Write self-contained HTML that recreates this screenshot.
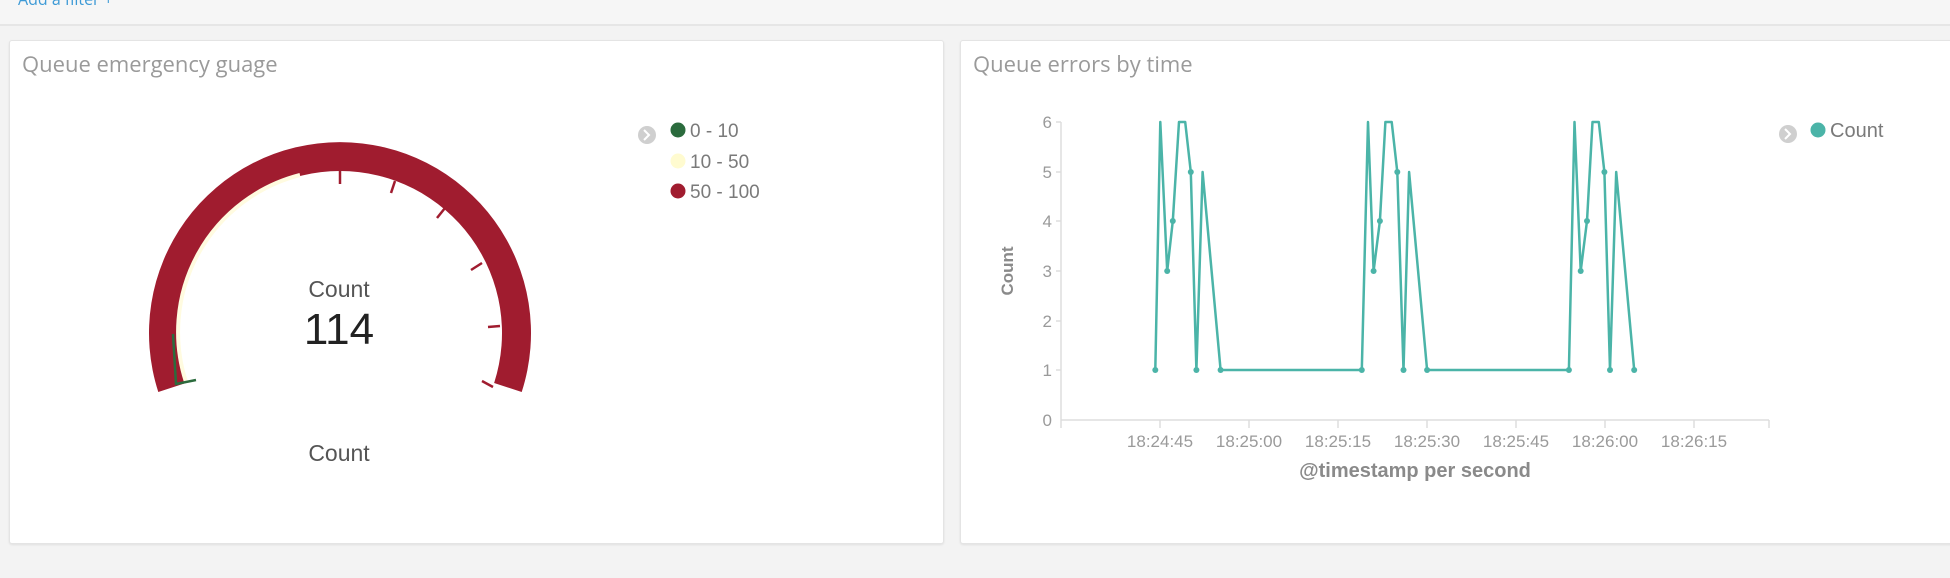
<!DOCTYPE html>
<html><head><meta charset="utf-8">
<style>
html,body{margin:0;padding:0;}
body{width:1950px;height:578px;background:#f3f3f3;position:relative;overflow:hidden;font-family:"Open Sans","Liberation Sans",sans-serif;}
.top{position:absolute;left:0;top:0;width:1950px;height:24px;background:#f6f6f6;border-bottom:2px solid #e6e6e6;}
.top span{position:absolute;left:18px;top:-12px;color:#3d9ad6;font-size:16px;}
.card{position:absolute;top:40px;height:502px;background:#fff;border:1px solid #e4e4e4;border-radius:3px;box-shadow:0 1px 2px rgba(0,0,0,0.08);}
.title{position:absolute;left:12px;top:8px;font-size:22px;color:#9a9a9a;}
svg{position:absolute;left:0;top:0;}
</style></head><body>
<div class="top"><span>Add a filter +</span></div>
<div class="card" style="left:9px;width:933px;"><div class="title">Queue emergency guage</div></div>
<div class="card" style="left:960px;width:1000px;"><div class="title">Queue errors by time</div></div>
<svg width="1950" height="578" xmlns="http://www.w3.org/2000/svg" font-family="Liberation Sans, sans-serif">
  <path d="M158.3,392 A191,191 0 1 1 521.7,392 L494.1,383 A162,162 0 1 0 185.9,383 Z" fill="#a01c2f"/>
  <path d="M186,382 A162,162 0 0 1 300,175" fill="none" stroke="#fffbe0" stroke-width="4"/>
  <path d="M173,334 L176,384 L196,380" fill="none" stroke="#2b6b3d" stroke-width="2.5"/>
  <g stroke="#a01c2f" stroke-width="2.5">
    <line x1="340" y1="171" x2="340" y2="184"/>
    <line x1="395" y1="181" x2="391" y2="193"/>
    <line x1="445" y1="208" x2="437" y2="218"/>
    <line x1="482" y1="263" x2="471" y2="270"/>
    <line x1="500" y1="326" x2="488" y2="327"/>
    <line x1="493" y1="387" x2="482" y2="381"/>
  </g>
  <text x="339" y="297" text-anchor="middle" font-size="23" fill="#555">Count</text>
  <text x="339" y="344" text-anchor="middle" font-size="44" fill="#222">114</text>
  <text x="339" y="461" text-anchor="middle" font-size="23" fill="#555">Count</text>
  <circle cx="647" cy="135" r="9" fill="#cfcfcf"/>
  <path d="M644,130 L649,135 L644,140" fill="none" stroke="#fff" stroke-width="2"/>
  <circle cx="678" cy="130" r="7.5" fill="#2b6b3d"/>
  <circle cx="678" cy="161" r="7.5" fill="#fffbd0"/>
  <circle cx="678" cy="191" r="7.5" fill="#a01c2f"/>
  <g font-size="19" fill="#7a7a7a">
    <text x="690" y="137">0 - 10</text>
    <text x="690" y="168">10 - 50</text>
    <text x="690" y="198">50 - 100</text>
  </g>
  <g stroke="#ddd" stroke-width="1.5">
    <line x1="1061" y1="122" x2="1061" y2="428"/>
    <line x1="1061" y1="420" x2="1769" y2="420"/>
    <line x1="1769" y1="420" x2="1769" y2="428"/>
    <line x1="1056" y1="122" x2="1061" y2="122"/>
    <line x1="1056" y1="172" x2="1061" y2="172"/>
    <line x1="1056" y1="221" x2="1061" y2="221"/>
    <line x1="1056" y1="271" x2="1061" y2="271"/>
    <line x1="1056" y1="321" x2="1061" y2="321"/>
    <line x1="1056" y1="370" x2="1061" y2="370"/>
    <line x1="1160" y1="420" x2="1160" y2="428"/>
    <line x1="1249" y1="420" x2="1249" y2="428"/>
    <line x1="1338" y1="420" x2="1338" y2="428"/>
    <line x1="1427" y1="420" x2="1427" y2="428"/>
    <line x1="1516" y1="420" x2="1516" y2="428"/>
    <line x1="1605" y1="420" x2="1605" y2="428"/>
    <line x1="1694" y1="420" x2="1694" y2="428"/>
  </g>
  <g font-size="17" fill="#9a9a9a" text-anchor="end">
    <text x="1052" y="128">6</text>
    <text x="1052" y="178">5</text>
    <text x="1052" y="227">4</text>
    <text x="1052" y="277">3</text>
    <text x="1052" y="327">2</text>
    <text x="1052" y="376">1</text>
    <text x="1052" y="426">0</text>
  </g>
  <g font-size="17" fill="#9a9a9a" text-anchor="middle">
    <text x="1160" y="447">18:24:45</text>
    <text x="1249" y="447">18:25:00</text>
    <text x="1338" y="447">18:25:15</text>
    <text x="1427" y="447">18:25:30</text>
    <text x="1516" y="447">18:25:45</text>
    <text x="1605" y="447">18:26:00</text>
    <text x="1694" y="447">18:26:15</text>
  </g>
  <text x="1415" y="477" text-anchor="middle" font-size="20" font-weight="bold" fill="#8a8a8a">@timestamp per second</text>
  <text transform="translate(1013,271) rotate(-90)" text-anchor="middle" font-size="17" font-weight="bold" fill="#8a8a8a">Count</text>
  <polyline fill="none" stroke="#4bb4a8" stroke-width="2.5" stroke-linejoin="round" points="1155.3,370 1160.3,122 1167.2,271 1172.8,221 1179,122 1185.2,122 1190.8,172 1196.4,370 1202.6,172 1220.6,370 1361.8,370 1368,122 1373.6,271 1379.9,221 1385.4,122 1391.7,122 1397.3,172 1403.5,370 1409.1,172 1427.1,370 1568.9,370 1574.5,122 1580.7,271 1587,221 1592.5,122 1598.8,122 1604.4,172 1610,370 1616.2,172 1634.2,370"/>
  <g fill="#4bb4a8">
    <circle cx="1155.3" cy="370" r="3"/><circle cx="1167.2" cy="271" r="3"/><circle cx="1172.8" cy="221" r="3"/><circle cx="1190.8" cy="172" r="3"/><circle cx="1196.4" cy="370" r="3"/><circle cx="1220.6" cy="370" r="3"/>
    <circle cx="1361.8" cy="370" r="3"/><circle cx="1373.6" cy="271" r="3"/><circle cx="1379.9" cy="221" r="3"/><circle cx="1397.3" cy="172" r="3"/><circle cx="1403.5" cy="370" r="3"/><circle cx="1427.1" cy="370" r="3"/>
    <circle cx="1568.9" cy="370" r="3"/><circle cx="1580.7" cy="271" r="3"/><circle cx="1587" cy="221" r="3"/><circle cx="1604.4" cy="172" r="3"/><circle cx="1610" cy="370" r="3"/><circle cx="1634.2" cy="370" r="3"/>
  </g>
  <circle cx="1788" cy="134" r="9" fill="#cfcfcf"/>
  <path d="M1785,129 L1790,134 L1785,139" fill="none" stroke="#fff" stroke-width="2"/>
  <circle cx="1818" cy="130" r="7.5" fill="#4bb4a8"/>
  <text x="1830" y="137" font-size="20" fill="#7a7a7a">Count</text>
</svg>
</body></html>
